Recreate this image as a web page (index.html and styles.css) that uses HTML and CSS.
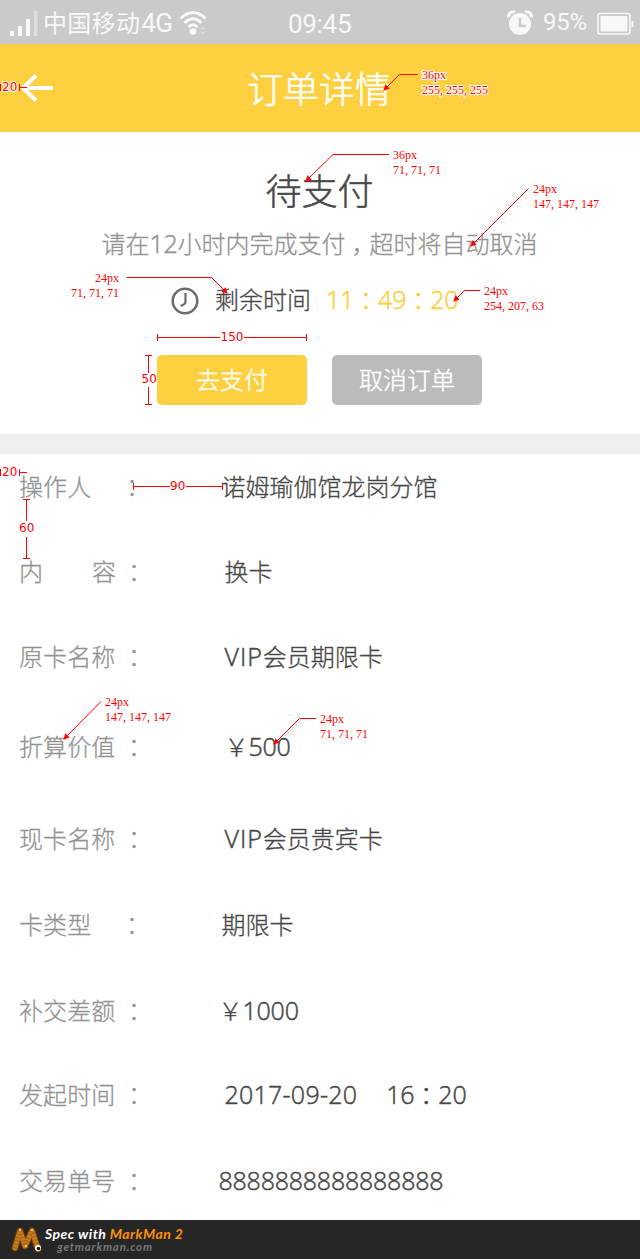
FILE: index.html
```html
<!DOCTYPE html>
<html lang="zh-CN">
<head>
<meta charset="utf-8">
<title>订单详情</title>
<link rel="stylesheet" href="styles.css">
</head>
<body>
<div class="page">
  <div class="status">
    <svg class="signal" width="30" height="28" viewBox="0 0 30 28"><path d="M2 23h4v5H2zM10 18h4v10h-4zM18 11h4v17h-4z" fill="#f8f8f8"/><path d="M26 3h3.500v25H26z" fill="#dedede"/></svg>
    <span class="carrier">中国移动<span class="carrier-net">4G</span></span>
    <svg class="wifi" width="28" height="26" viewBox="0 0 28 26" fill="none" stroke="#f8f8f8" stroke-width="2.800"><path d="M1.500 8.500Q14-3.500 26.500 8.500M5.500 13Q14 4.500 22.500 13M9.500 17Q14 12.500 18.500 17"/><circle cx="14" cy="21.500" r="3.300" fill="#f8f8f8" stroke="none"/><path d="M22 19.500l2-2 2 2M22 21.500l2 2 2-2" stroke-width="1" stroke="#e4e4e4"/></svg>
    <span class="time">09:45</span>
    <svg class="alarm" width="26" height="26" viewBox="0 0 26 26"><circle cx="13" cy="14" r="11" fill="#f8f8f8"/><path d="M1.500 7.500A5 5 0 0 1 8 2M18 2A5 5 0 0 1 24.500 7.500" fill="none" stroke="#f8f8f8" stroke-width="3"/><path d="M13 8v8h6" fill="none" stroke="#cacaca" stroke-width="2.400"/></svg>
    <span class="percent">95%</span>
    <svg class="battery" width="37" height="24" viewBox="0 0 37 24"><rect x="1" y="1.500" width="32" height="20.500" rx="2.500" fill="none" stroke="#f8f8f8" stroke-width="1.600"/><rect x="3.500" y="4" width="27" height="15.500" rx="1" fill="#f8f8f8"/><path d="M34.500 9h2v6h-2z" fill="#f8f8f8"/></svg>
  </div>

  <header class="header">
    <svg class="back" width="34" height="30" viewBox="0 0 34 30" fill="none" stroke="#fff" stroke-width="4"><path d="M16 2.500L3 15l13 12.500M3 15h30"/></svg>
    <h1 class="title">订单详情</h1>
  </header>

  <section class="summary">
    <h2 class="state">待支付</h2>
    <p class="hint">请在<span class="num">12</span>小时内完成支付<span class="comma">，</span>超时将自动取消</p>
    <div class="remain">
      <svg class="clock" width="28" height="28" viewBox="0 0 28 28" fill="none" stroke="#6b6b6b"><circle cx="14" cy="14" r="12.300" stroke-width="2.500"/><path d="M14.500 6v8.500q0 3-5 4.500" stroke-width="2.200"/></svg>
      <span class="remain-label">剩余时间</span>
      <span class="countdown num">11<i class="colon">：</i>49<i class="colon">：</i>20</span>
    </div>
    <div class="actions">
      <button class="btn btn-pay">去支付</button>
      <button class="btn btn-cancel">取消订单</button>
    </div>
  </section>

  <dl class="details">
    <div class="row"><dt class="label">操作人</dt><dd class="sep sep-near">：</dd><dd class="value v3">诺姆瑜伽馆龙岗分馆</dd></div>
    <div class="row"><dt class="label spread"><span>内</span><span>容</span></dt><dd class="sep">：</dd><dd class="value v6">换卡</dd></div>
    <div class="row"><dt class="label">原卡名称</dt><dd class="sep">：</dd><dd class="value v6"><span class="num vip">VIP</span>会员期限卡</dd></div>
    <div class="row"><dt class="label">折算价值</dt><dd class="sep">：</dd><dd class="value v6">￥<span class="num">500</span></dd></div>
    <div class="row"><dt class="label">现卡名称</dt><dd class="sep">：</dd><dd class="value v6"><span class="num vip">VIP</span>会员贵宾卡</dd></div>
    <div class="row"><dt class="label">卡类型</dt><dd class="sep sep-near">：</dd><dd class="value v3">期限卡</dd></div>
    <div class="row"><dt class="label">补交差额</dt><dd class="sep">：</dd><dd class="value">￥<span class="num">1000</span></dd></div>
    <div class="row"><dt class="label">发起时间</dt><dd class="sep">：</dd><dd class="value v6 num"><span class="date">2017-09-20</span><span class="hour">16<i class="colon">：</i>20</span></dd></div>
    <div class="row"><dt class="label">交易单号</dt><dd class="sep">：</dd><dd class="value num">8888888888888888</dd></div>
  </dl>

  <footer class="footer">
    <svg class="worm" width="32" height="28" viewBox="0 0 32 28" fill="none" stroke-linecap="round" stroke-linejoin="round"><path d="M4 22L9 5l5 15 7-15 6 18" stroke="#6f3d0b" stroke-width="7"/><path d="M4 22L9 5l5 15 7-15 6 18" stroke="#c47a1e" stroke-width="5"/><path d="M4 22L9 5l5 15 7-15 6 18" stroke="#8a4f10" stroke-width="5" stroke-dasharray=".5 3" stroke-linecap="butt"/><circle cx="9" cy="4" r="1.200" fill="#f3c672"/><circle cx="21" cy="4" r="1.200" fill="#f3c672"/><circle cx="15" cy="20" r="1.200" fill="#f3c672"/><circle cx="27" cy="22" r="3" fill="#fff"/><circle cx="27.500" cy="22.500" r="1.800" fill="#111"/></svg>
    <div class="credit">
      <div class="credit-main">Spec with <span class="brand">MarkMan 2</span></div>
      <div class="credit-url">getmarkman.com</div>
    </div>
  </footer>

  <svg class="marks" width="640" height="1259" viewBox="0 0 640 1259">
    <defs><marker id="tip" viewBox="0 0 6 6" refX="5" refY="3" markerWidth="6" markerHeight="6" markerUnits="userSpaceOnUse" orient="auto"><path d="M0 0l6 3-6 3z" fill="#f00"/></marker></defs>
    <g class="leaders">
      <path d="M418 74.500H399.500L384 90"/>
      <path d="M389 154.500H333L306 181"/>
      <path d="M528.500 188.500L471 246"/>
      <path d="M126.500 277.500H211.500L227 293"/>
      <path d="M480 290.500H464.500L454 301"/>
      <path d="M101 701.500L64 739"/>
      <path d="M316 718.500H299.500L274 744"/>
    </g>
    <g class="rulers">
      <path d="M.500 84v7M19.500 84v7M20 87.500h7"/>
      <path d="M157.500 334v7M158 337.500h62M244 337.500h62M306.500 334v7"/>
      <path d="M145 355.500h7M148.500 356v17M148.500 387v17M145 404.500h7"/>
      <path d="M.500 469v7M19.500 469v7M20 472.500h7"/>
      <path d="M133.500 483v7M134 486.500h36M186 486.500h36M222.500 483v7"/>
      <path d="M23 499.500h7M26.500 500v21M26.500 537v21M23 558.500h7"/>
    </g>
    <g class="sizes">
      <text x="2" y="91">20</text><text x="220.500" y="341">150</text><text x="141.500" y="383">50</text>
      <text x="2" y="476">20</text><text x="170" y="490">90</text><text x="19" y="532">60</text>
    </g>
    <g class="specs">
      <text x="422" y="79">36px</text><text x="422" y="94">255, 255, 255</text>
      <text x="393" y="159">36px</text><text x="393" y="174">71, 71, 71</text>
      <text x="533" y="193">24px</text><text x="533" y="208">147, 147, 147</text>
      <text x="95" y="282">24px</text><text x="71" y="297">71, 71, 71</text>
      <text x="484" y="295">24px</text><text x="484" y="310">254, 207, 63</text>
      <text x="105" y="706">24px</text><text x="105" y="721">147, 147, 147</text>
      <text x="320" y="723">24px</text><text x="320" y="738">71, 71, 71</text>
    </g>
  </svg>
</div>
</body>
</html>
```
FILE: styles.css
```css
* { box-sizing: border-box; margin: 0; padding: 0; }
body { background: #fff; font-family: "Noto Sans CJK SC", sans-serif; font-size: 24px; font-weight: 300; color: #474747; }
.page { position: relative; width: 640px; height: 1259px; display: flex; flex-direction: column; overflow: hidden; }

.status { height: 44px; flex: none; display: grid; grid-template-columns: 35px 136px 109px 219px 36px 54px 37px; align-items: center; padding-left: 8px; background: #cacaca; color: #f8f8f8; line-height: 44px; white-space: nowrap; }
.signal { margin-top: -4px; }
.carrier { font-weight: 400; margin-top: -4px; letter-spacing: .3px; }
.carrier-net { font: 400 26px/44px Roboto, sans-serif; margin-left: 1px; letter-spacing: -.6px; }
.wifi { margin-top: -3px; }
.time { font: 400 26px/48px Roboto, sans-serif; letter-spacing: -.3px; }
.alarm { margin-top: -3px; }
.percent { font: 400 24px/42px Roboto, sans-serif; letter-spacing: -.2px; margin-top: -4px; }
.battery { margin-top: -1px; }

.header { height: 88px; flex: none; display: grid; grid-template-columns: 197px 244px 199px; align-items: center; background: #fecf3f; color: #fff; }
.back { margin: 0 0 0 20px; }
.title { font-size: 36px; font-weight: 300; line-height: 86px; height: 88px; text-align: center; -webkit-text-stroke: .6px; }

.summary { height: 302px; flex: none; display: flex; flex-direction: column; align-items: center; padding-top: 32px; -webkit-text-stroke: .3px; }
.state { font-size: 36px; line-height: 50px; font-weight: 300; margin-left: -1px; -webkit-text-stroke: .5px; }
.hint { color: #939393; line-height: 36px; margin-top: 11px; margin-left: -1px; white-space: nowrap; }
.comma { margin: 0 6px 0 6px; font-feature-settings: "halt"; }
.num { font-family: "Open Sans", "Noto Sans", sans-serif; font-size: 25px; font-weight: 300; letter-spacing: -.22px; -webkit-text-stroke: .5px; }
.hint .num, .value .num { line-height: 1; }
.vip { letter-spacing: .95px; }
.remain { display: flex; align-items: center; align-self: flex-start; margin: 20px 0 0 171px; height: 36px; }
.clock { margin-top: 3px; }
.remain-label { margin-left: 16px; line-height: 36px; }
.countdown { margin-left: 15px; color: #fecf3f; line-height: 36px; white-space: nowrap; }
.colon { font: 300 24px/1 "Noto Sans CJK JP", sans-serif; letter-spacing: 0; position: relative; top: 1px; }
.actions { display: flex; gap: 25px; margin: 38px 0 0 -1px; }
.btn { width: 150px; height: 50px; border: 0; border-radius: 5px; color: #fff; padding-bottom: 2px; font: 300 24px/48px "Noto Sans CJK SC", sans-serif; -webkit-text-stroke: .4px; }
.btn-pay { background: #fecf3f; }
.btn-cancel { background: #bbb; }

.details { height: 786px; flex: none; display: grid; grid-template-rows: 85px 85px 90px 92px 86px 86px 84px 86px 36px; border-top: 20px solid #efefef; padding-top: 14px; -webkit-text-stroke: .3px; }
.row { display: grid; grid-template-columns: 103px 97px 1fr; padding-left: 19px; line-height: 36px; height: 36px; white-space: nowrap; }
.label { color: #939393; letter-spacing: .1px; }
.spread { display: flex; justify-content: space-between; width: 97px; }
.sep { color: #939393; font-family: "Noto Sans CJK JP", sans-serif; padding-top: 1px; }
.sep-near { margin-left: -2px; }
.value { margin-left: -.5px; }
.v3 { padding-left: 3px; }
.v6 { padding-left: 6px; }
.date { letter-spacing: .25px; }
.hour { margin-left: 29px; }

.footer { height: 39px; flex: none; display: flex; align-items: center; padding-left: 11px; background: #262626; }
.credit { font-family: Lato, sans-serif; font-style: italic; font-weight: 700; margin: -1px 0 0 2px; white-space: nowrap; }
.credit-main { color: #fff; font-size: 14px; line-height: 15px; letter-spacing: .45px; }
.brand { color: #ff9000; }
.credit-url { color: #777; font-size: 11.5px; line-height: 12px; margin: 0 0 0 12px; letter-spacing: .8px; }

.marks { position: absolute; left: 0; top: 0; pointer-events: none; }
.leaders path, .rulers path { fill: none; stroke: #f00; stroke-width: 1; }
.leaders path { marker-end: url(#tip); }
.sizes text, .specs text { fill: #f00; stroke: #fff; stroke-width: 2px; paint-order: stroke; font-weight: 400; }
.sizes text { font-family: "DejaVu Sans", sans-serif; font-size: 12px; }
.specs text { font-family: "Liberation Serif", serif; font-size: 12px; }
```
